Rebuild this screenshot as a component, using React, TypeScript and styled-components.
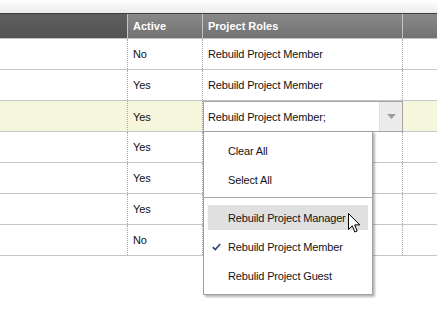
import React from "react";
import styled, { createGlobalStyle } from "styled-components";

const Global = createGlobalStyle`
  html, body { margin: 0; padding: 0; background: #ffffff; }
  body {
    font-family: "Liberation Sans", Arial, sans-serif;
    font-size: 11px;
    letter-spacing: -0.15px;
    color: #111;
  }
`;

const Page = styled.div`
  width: 437px;
  height: 313px;
  overflow: hidden;
  position: relative;
  background: #fff;
`;

const TopStrip = styled.div`
  height: 13px;
  background: linear-gradient(#ffffff, #ebebeb);
`;

const COLS = "127px 75px 200px 1fr";

const HeaderRow = styled.div`
  display: grid;
  grid-template-columns: ${COLS};
  height: 24px;
  border-top: 1px solid #3e3e3e;
  border-bottom: 1px solid #c2c2c2;
`;

const HeaderCell = styled.div<{ $sorted?: boolean; $first?: boolean }>`
  display: flex;
  align-items: center;
  padding-left: 5px;
  color: #fff;
  font-weight: bold;
  font-size: 11px;
  letter-spacing: 0;
  background: ${(p) =>
    p.$sorted
      ? "linear-gradient(#5f5f5f, #535353)"
      : "linear-gradient(#898989, #727272)"};
  border-left: ${(p) => (p.$first ? "none" : "1px solid #c4c4c4")};
`;

const Row = styled.div<{ $selected?: boolean }>`
  display: grid;
  grid-template-columns: ${COLS};
  height: 30px;
  border-bottom: 1px solid #c6c6c6;
  background: ${(p) => (p.$selected ? "#f6f6dc" : "#ffffff")};
`;

const Cell = styled.div<{ $first?: boolean }>`
  display: flex;
  align-items: center;
  padding-left: 5px;
  border-left: ${(p) => (p.$first ? "none" : "1px dotted #a9a9a9")};
  position: relative;
  overflow: visible;
`;

const EditorCell = styled.div`
  border-left: 1px dotted #a9a9a9;
  position: relative;
  overflow: visible;
  z-index: 2;
`;

const Combo = styled.div`
  position: relative;
  box-sizing: border-box;
  width: 200px;
  height: 31px;
  background: #fff;
  border: 1px solid #a3a3a3;
  display: flex;
  align-items: stretch;
`;

const ComboText = styled.div`
  flex: 1;
  display: flex;
  align-items: center;
  padding-left: 4px;
  color: #111;
`;

const ComboButton = styled.div`
  width: 22px;
  background: #ececec;
  border-left: 1px solid #e2e2e2;
  display: flex;
  align-items: center;
  justify-content: center;
`;

const Menu = styled.div`
  position: absolute;
  top: 29px;
  left: -1px;
  width: 170px;
  box-sizing: border-box;
  background: #fff;
  border: 1px solid #a0a0a0;
  box-shadow: 2px 2px 2px rgba(0, 0, 0, 0.28);
  padding: 6px 0 6px 0;
  display: flex;
  flex-direction: column;
`;

const Item = styled.div<{ $hover?: boolean; $gap?: number }>`
  position: relative;
  height: 25px;
  margin: ${(p) => p.$gap ?? 0}px 4px 0 4px;
  padding-left: 20px;
  display: flex;
  align-items: center;
  color: #141414;
  background: ${(p) => (p.$hover ? "#e0e0e0" : "transparent")};
`;

const Separator = styled.div`
  height: 1px;
  background: #a8a8a8;
  margin: 5px 0 7px 0;
`;

const Check = styled.svg`
  position: absolute;
  left: 4px;
  top: 9px;
`;

const Cursor = styled.svg`
  position: absolute;
  left: 348px;
  top: 213px;
  z-index: 5;
`;

const rows = [
  { active: "No", role: "Rebuild Project Member" },
  { active: "Yes", role: "Rebuild Project Member" },
  { active: "Yes", role: "", selected: true },
  { active: "Yes", role: "" },
  { active: "Yes", role: "" },
  { active: "Yes", role: "" },
  { active: "No", role: "" },
];

export default function App() {
  return (
    <Page>
      <Global />
      <TopStrip />
      <HeaderRow>
        <HeaderCell $sorted $first />
        <HeaderCell>Active</HeaderCell>
        <HeaderCell>Project Roles</HeaderCell>
        <HeaderCell />
      </HeaderRow>
      {rows.map((r, i) => (
        <Row key={i} $selected={r.selected}>
          <Cell $first />
          <Cell>{r.active}</Cell>
          {r.selected ? (
            <EditorCell>
              <Combo>
                <ComboText>Rebuild Project Member;</ComboText>
                <ComboButton>
                  <svg width="9" height="5" viewBox="0 0 9 5">
                    <path d="M0 0 H9 L4.5 5 Z" fill="#9c9c9c" />
                  </svg>
                </ComboButton>
                <Menu>
                  <Item>Clear All</Item>
                  <Item $gap={4}>Select All</Item>
                  <Separator />
                  <Item $hover>Rebuild Project Manager</Item>
                  <Item $gap={4}>
                    <Check width="9" height="8" viewBox="0 0 9 8">
                      <path
                        d="M0.8 4.2 L3.3 6.6 L8.2 1"
                        fill="none"
                        stroke="#2d4675"
                        strokeWidth="1.6"
                      />
                    </Check>
                    Rebuild Project Member
                  </Item>
                  <Item $gap={4}>Rebulid Project Guest</Item>
                </Menu>
              </Combo>
            </EditorCell>
          ) : (
            <Cell>{r.role}</Cell>
          )}
          <Cell />
        </Row>
      ))}
      <Cursor width="13" height="21" viewBox="0 0 13 21">
        <path
          d="M0.5 0.5 L0.5 16.5 L4.3 12.8 L6.8 19 L9.2 18 L6.7 11.9 L11.8 11.9 Z"
          fill="#ffffff"
          stroke="#000000"
          strokeWidth="1"
          strokeLinejoin="miter"
        />
      </Cursor>
    </Page>
  );
}
